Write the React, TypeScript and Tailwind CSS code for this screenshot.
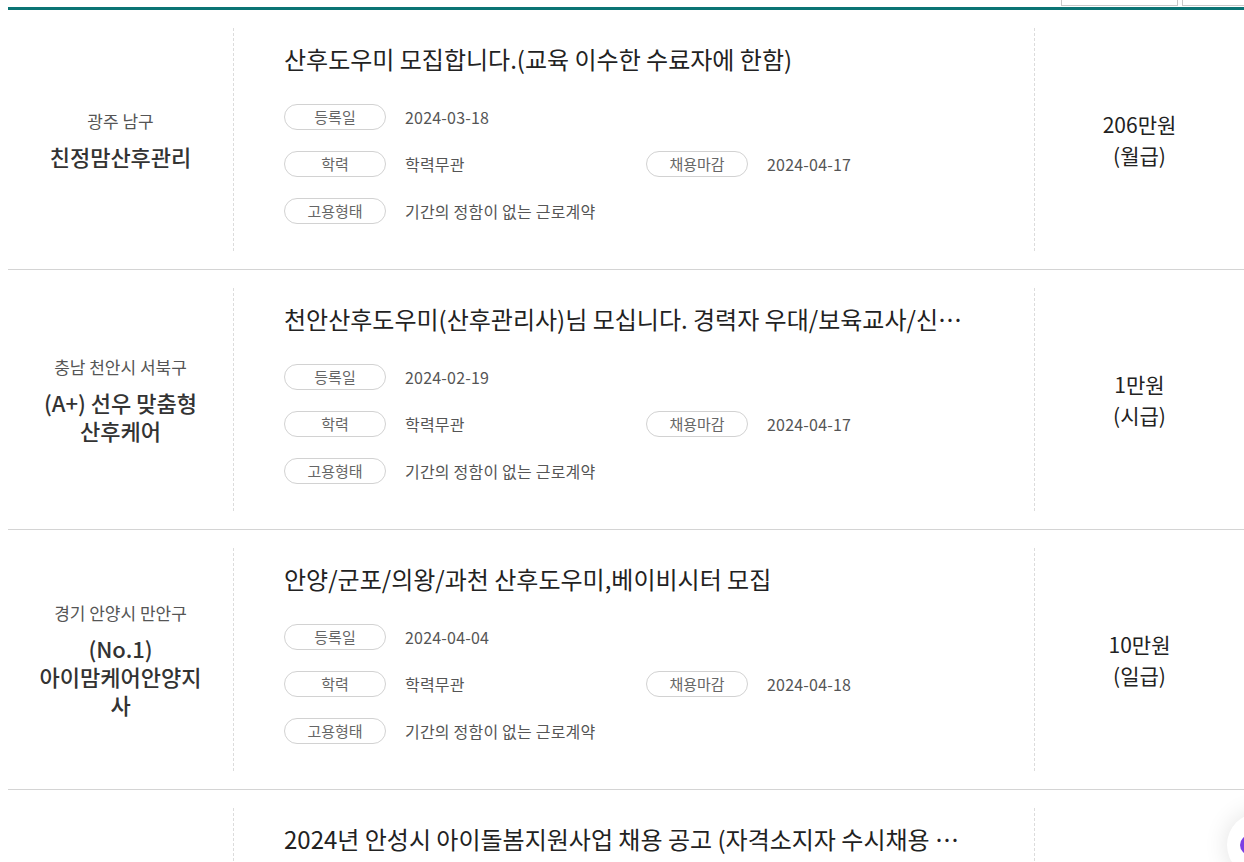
import React, { FC } from "react"

interface Job {
    region: string
    company: string
    title: string
    regDate: string
    edu: string
    deadline: string
    empType: string
    pay: string
    payType: string
}

const jobs: Job[] = [
    {
        region: "광주 남구",
        company: "친정맘산후관리",
        title: "산후도우미 모집합니다.(교육 이수한 수료자에 한함)",
        regDate: "2024-03-18",
        edu: "학력무관",
        deadline: "2024-04-17",
        empType: "기간의 정함이 없는 근로계약",
        pay: "206만원",
        payType: "(월급)",
    },
    {
        region: "충남 천안시 서북구",
        company: "(A+) 선우 맞춤형 산후케어",
        title: "천안산후도우미(산후관리사)님 모십니다. 경력자 우대/보육교사/신입 가능 교육 후 바로 투입",
        regDate: "2024-02-19",
        edu: "학력무관",
        deadline: "2024-04-17",
        empType: "기간의 정함이 없는 근로계약",
        pay: "1만원",
        payType: "(시급)",
    },
    {
        region: "경기 안양시 만안구",
        company: "(No.1) 아이맘케어안양지사",
        title: "안양/군포/의왕/과천 산후도우미,베이비시터 모집",
        regDate: "2024-04-04",
        edu: "학력무관",
        deadline: "2024-04-18",
        empType: "기간의 정함이 없는 근로계약",
        pay: "10만원",
        payType: "(일급)",
    },
    {
        region: "경기 안성시",
        company: "안성시 육아종합지원센터",
        title: "2024년 안성시 아이돌봄지원사업 채용 공고 (자격소지자 수시채용 상시 모집)",
        regDate: "2024-04-01",
        edu: "학력무관",
        deadline: "2024-12-31",
        empType: "기간의 정함이 있는 근로계약",
        pay: "1만원",
        payType: "(시급)",
    },
]

const Chip: FC<{ label: string }> = ({ label }) => (
    <span className="w-[102px] h-[26px] shrink-0 rounded-full border border-[#d2d2d2] flex items-center justify-center text-[15px] text-[#666]">
        {label}
    </span>
)

const Field: FC<{ label: string; value: string }> = ({ label, value }) => (
    <div className="flex items-center gap-[19px]">
        <Chip label={label} />
        <span className="text-[16px] text-[#555] tracking-[0.2px]">{value}</span>
    </div>
)

const JobRow: FC<{ job: Job }> = ({ job }) => (
    <li className="flex h-[260px] border-b border-[#d4d4d4] py-[18px]">
        <div className="w-[226px] shrink-0 flex flex-col items-center justify-center px-[30px] text-center border-r border-dashed border-[#dcdcdc] break-keep [overflow-wrap:anywhere]">
            <p className="text-[17px] leading-[24px] text-[#555]">{job.region}</p>
            <p className="mt-[9px] text-[22px] leading-[28px] font-medium text-[#333]">{job.company}</p>
        </div>
        <div className="w-[801px] shrink-0 pl-[50px] pr-[50px] pt-[13px] border-r border-dashed border-[#dcdcdc]">
            <h3 className="text-[24px] leading-[36px] text-[#222] truncate w-[690px]">{job.title}</h3>
            <div className="mt-[27px] flex flex-col gap-[21px]">
                <Field label="등록일" value={job.regDate} />
                <div className="grid grid-cols-[362px_1fr]">
                    <Field label="학력" value={job.edu} />
                    <Field label="채용마감" value={job.deadline} />
                </div>
                <Field label="고용형태" value={job.empType} />
            </div>
        </div>
        <div className="flex-1 flex flex-col items-center justify-center text-[21px] leading-[31px] text-[#222]">
            <span>{job.pay}</span>
            <span>{job.payType}</span>
        </div>
    </li>
)

export default function App() {
    return (
        <div
            className="relative w-[1244px] h-[862px] overflow-hidden bg-white"
            style={{ fontFamily: '"Noto Sans CJK KR", "Noto Sans", sans-serif' }}
        >
            {/* bottom of the filter bar that is scrolled away */}
            <div className="h-[7px] flex justify-end gap-[4px] overflow-hidden">
                <div className="w-[117px] h-[6px] border-x border-b border-[#c8c8c8]" />
                <div className="w-[62px] h-[6px] border-l border-b border-[#c8c8c8]" />
            </div>
            <ul className="ml-[8px] border-t-[3px] border-[#0b7474]">
                {jobs.map(job => (
                    <JobRow key={job.title} job={job} />
                ))}
            </ul>
            {/* floating chat button */}
            <div className="absolute left-[1227px] top-[813px] w-[64px] h-[64px] rounded-full bg-white shadow-[0_0_24px_rgba(0,0,0,0.12)] flex items-center pl-[13px]">
                <div className="w-[10px] h-[20px] rounded-l-full bg-[#7b3fe4]" />
            </div>
        </div>
    )
}
